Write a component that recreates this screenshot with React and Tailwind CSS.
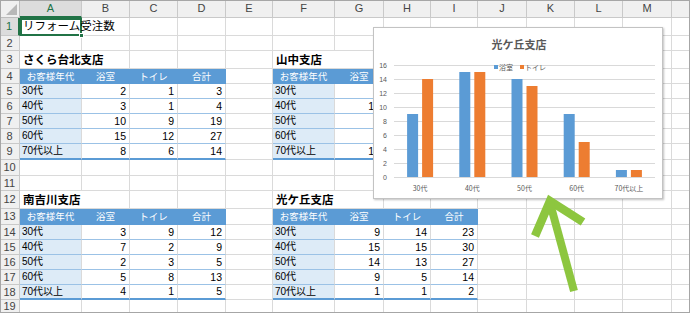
import React from "react";

const COLS = ["", "A", "B", "C", "D", "E", "F", "G", "H", "I", "J", "K", "L", "M", ""];
const NROWS = 20; // header row + rows 1..19

const tables = [
  {
    r: 3, c: 1, title: "さくら台北支店",
    data: [["30代", 2, 1, 3], ["40代", 3, 1, 4], ["50代", 10, 9, 19], ["60代", 15, 12, 27], ["70代以上", 8, 6, 14]],
  },
  {
    r: 3, c: 6, title: "山中支店",
    data: [["30代", 8, 4, 12], ["40代", 12, 9, 21], ["50代", 7, 6, 13], ["60代", 9, 8, 17], ["70代以上", 10, 3, 13]],
  },
  {
    r: 12, c: 1, title: "南吉川支店",
    data: [["30代", 3, 9, 12], ["40代", 7, 2, 9], ["50代", 2, 3, 5], ["60代", 5, 8, 13], ["70代以上", 4, 1, 5]],
  },
  {
    r: 12, c: 6, title: "光ケ丘支店",
    data: [["30代", 9, 14, 23], ["40代", 15, 15, 30], ["50代", 14, 13, 27], ["60代", 9, 5, 14], ["70代以上", 1, 1, 2]],
  },
];
const HEAD = ["お客様年代", "浴室", "トイレ", "合計"];

function getCell(r, c) {
  if (r === 0 && c === 0) return { kind: "corner" };
  if (r === 0) return { kind: c === 1 ? "colheadSel" : "colhead", text: COLS[c] };
  if (c === 0) return { kind: r === 1 ? "rowheadSel" : "rowhead", text: String(r) };
  if (r === 1 && c === 1) return { kind: "a1", text: "リフォーム受注数" };
  for (const t of tables) {
    const dc = c - t.c;
    if (dc < 0 || dc > 3) continue;
    if (r === t.r && dc === 0) return { kind: "heading", text: t.title };
    if (r === t.r + 1) return { kind: "thead", text: HEAD[dc] };
    const dr = r - t.r - 2;
    if (dr >= 0 && dr < 5) {
      const last = dr === 4;
      const v = t.data[dr][dc];
      if (dc === 0) return { kind: last ? "firstLast" : "first", text: v };
      return { kind: last ? "numLast" : "num", text: String(v) };
    }
  }
  return { kind: "plain" };
}

function Cell({ r, c }) {
  const { kind, text } = getCell(r, c);
  switch (kind) {
    case "corner":
      return (
        <div className="relative bg-[#f0f0f0] border-r border-b border-[#bdbdbd]">
          <div className="absolute right-[2px] bottom-[2px] w-0 h-0 border-l-[11px] border-l-transparent border-b-[11px] border-b-[#b8b8b8]" />
        </div>
      );
    case "colhead":
      return (
        <div className="flex items-center justify-center bg-[#f0f0f0] border-r border-b border-[#c9c9c9] text-[11px] text-[#444]">
          {text}
        </div>
      );
    case "colheadSel":
      return (
        <div className="flex items-center justify-center bg-[#dcdcdc] border-r border-[#c9c9c9] border-b-2 border-b-[#217346] text-[11px] text-[#217346]">
          {text}
        </div>
      );
    case "rowhead":
      return (
        <div className="flex items-center justify-center bg-[#f0f0f0] border-r border-b border-[#c9c9c9] text-[11px] text-[#444]">
          {text}
        </div>
      );
    case "rowheadSel":
      return (
        <div className="flex items-center justify-center bg-[#dcdcdc] border-b border-[#c9c9c9] border-r-2 border-r-[#217346] text-[11px] text-[#217346]">
          {text}
        </div>
      );
    case "a1":
      return (
        <div className="relative z-10 flex items-center pl-[1px] border-2 border-[#217346] whitespace-nowrap text-[11.5px] text-black">
          {text}
          <div className="absolute right-[-4px] bottom-[-4px] w-[5px] h-[5px] bg-[#217346] border border-white" />
        </div>
      );
    case "heading":
      return (
        <div className="relative z-10 flex items-end pb-[2px] pl-[3px] border-b border-[#dadada] whitespace-nowrap text-[11.5px] font-bold text-black">
          {text}
        </div>
      );
    case "thead":
      return (
        <div className="flex items-center justify-center bg-[#5b9bd5] border-r border-[#5b9bd5] whitespace-nowrap text-[9.5px] text-white">
          {text}
        </div>
      );
    case "first":
      return (
        <div className="flex items-center pl-[2px] bg-[#ddebf7] border-r border-r-[#dadada] border-b border-b-[#9bc2e6] whitespace-nowrap text-[10px] text-black">
          {text}
        </div>
      );
    case "firstLast":
      return (
        <div className="flex items-center pl-[2px] bg-[#ddebf7] border-r border-r-[#dadada] border-b-2 border-b-[#5b9bd5] whitespace-nowrap text-[10px] text-black">
          {text}
        </div>
      );
    case "num":
      return (
        <div className="flex items-center justify-end pr-[3px] bg-white border-r border-r-[#dadada] border-b border-b-[#9bc2e6] text-[10.5px] text-black">
          {text}
        </div>
      );
    case "numLast":
      return (
        <div className="flex items-center justify-end pr-[3px] bg-white border-r border-r-[#dadada] border-b-2 border-b-[#5b9bd5] text-[10.5px] text-black">
          {text}
        </div>
      );
    default:
      return <div className="border-r border-b border-[#dadada]" />;
  }
}

const blue = [9, 15, 14, 9, 1];
const orange = [14, 15, 13, 5, 1];
const cats = ["30代", "40代", "50代", "60代", "70代以上"];

function Chart() {
  const x0 = 20, x1 = 281, y0 = 149, unit = 7;
  const cw = (x1 - x0) / 5;
  return (
    <div className="absolute left-[373px] top-[27px] w-[290px] h-[172px] bg-white border border-[#c3c3c3] shadow-[1px_1px_2px_rgba(0,0,0,0.25)]">
      <svg width="290" height="172" className="block font-['Noto_Sans_CJK_JP',sans-serif]">
        <text x="145" y="21" textAnchor="middle" fontSize="11" fontWeight="700" fill="#595959">光ケ丘支店</text>
        {[0, 2, 4, 6, 8, 10, 12, 14, 16].map((v) => (
          <g key={v}>
            <line x1={x0} x2={x1} y1={y0 - v * unit + 0.5} y2={y0 - v * unit + 0.5} stroke="#d9d9d9" strokeWidth="1" />
            <text x="13" y={y0 - v * unit + 2.5} textAnchor="end" fontSize="7" fill="#595959" fontFamily="Liberation Sans, sans-serif">{v}</text>
          </g>
        ))}
        {cats.map((cat, i) => {
          const cx = x0 + cw * i + cw / 2;
          return (
            <g key={cat}>
              <rect x={cx - 13} y={y0 - blue[i] * unit} width="11" height={blue[i] * unit} fill="#5b9bd5" />
              <rect x={cx + 2} y={y0 - orange[i] * unit} width="11" height={orange[i] * unit} fill="#ed7d31" />
              <text x={cx} y="163" textAnchor="middle" fontSize="7" fill="#595959">{cat}</text>
            </g>
          );
        })}
        <rect x="120" y="37" width="4" height="4" fill="#5b9bd5" />
        <text x="125" y="42" fontSize="7" fill="#595959">浴室</text>
        <rect x="146" y="37" width="4" height="4" fill="#ed7d31" />
        <text x="151" y="42" fontSize="7" fill="#595959">トイレ</text>
      </svg>
    </div>
  );
}

function Arrow() {
  return (
    <svg className="absolute left-0 top-0 pointer-events-none" width="690" height="313">
      <polyline points="535,236 550,201 583,222" fill="none" stroke="#8dc63f" strokeWidth="8.5" strokeLinejoin="miter" strokeMiterlimit="10" />
      <line x1="550" y1="203" x2="574" y2="291" stroke="#8dc63f" strokeWidth="8" />
    </svg>
  );
}

export default function App() {
  const cells = [];
  for (let r = 0; r < NROWS; r++) {
    for (let c = 0; c < COLS.length; c++) {
      cells.push(<Cell key={r + "-" + c} r={r} c={c} />);
    }
  }
  return (
    <div className="relative w-[690px] h-[313px] overflow-hidden bg-white font-['Liberation_Sans','Noto_Sans_CJK_JP',sans-serif]">
      <div className="grid grid-cols-[20px_62px_48px_48px_48px_47px_62px_49px_47px_47px_49px_48px_48px_49px_18px] grid-rows-[18px_18px_15px_18px_15px_15px_15px_15px_15px_16px_16px_15px_18px_16px_15px_15px_15px_15px_15px_13px] leading-none">
        {cells}
      </div>
      <Chart />
      <Arrow />
      <div className="absolute inset-0 border border-[#a6a6a6] pointer-events-none" />
    </div>
  );
}
